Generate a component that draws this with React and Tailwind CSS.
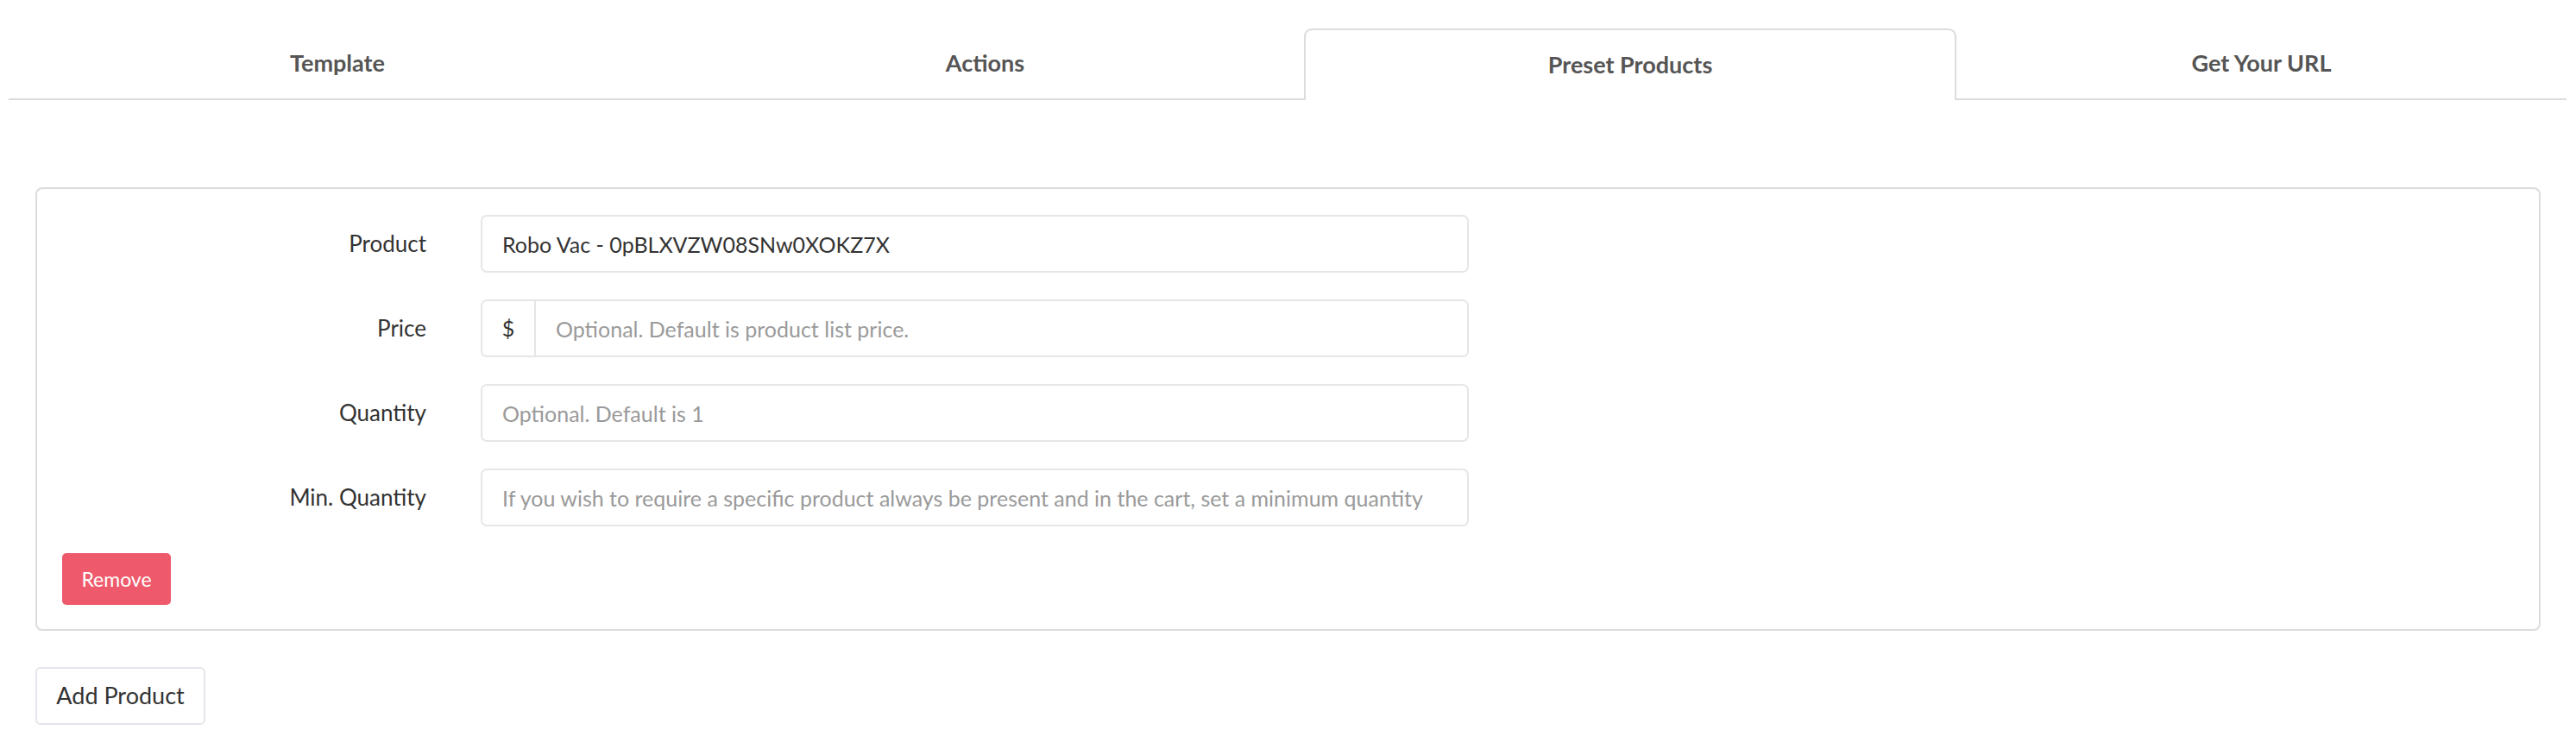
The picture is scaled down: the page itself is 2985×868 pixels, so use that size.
import { useState } from 'react'

const tabs = [
  { label: 'Template', w: 'w-[762px]' },
  { label: 'Actions', w: 'w-[739px]' },
  { label: 'Preset Products', w: 'w-[756px]', active: true },
  { label: 'Get Your URL', w: 'w-[707px]' },
]

function Field({ label, children }) {
  return (
    <div className="flex h-[67px] items-center">
      <div className="w-[422px] text-right text-[26px] text-[#333]">{label}</div>
      <div className="ml-[63px] h-full w-[1145px]">{children}</div>
    </div>
  )
}

const inputCls =
  'h-full w-full rounded-[7px] border-2 border-[#e6e6e6] bg-white px-[23px] text-[25px] text-[#333] placeholder:text-[#9a9a9a] outline-none'

export default function App() {
  const [product, setProduct] = useState('Robo Vac - 0pBLXVZW08SNw0XOKZ7X')

  return (
    <div className="min-h-screen bg-white pt-[33px] font-['Lato',sans-serif]">
      {/* tab strip */}
      <div className="flex h-[83px] pl-[10px]">
        {tabs.map((t) =>
          t.active ? (
            <div
              key={t.label}
              className={`${t.w} flex items-center justify-center rounded-t-[9px] border-2 border-b-0 border-[#dcdcdc] text-[27px] font-bold text-[#555]`}
            >
              {t.label}
            </div>
          ) : (
            <div
              key={t.label}
              className={`${t.w} flex items-center justify-center border-b-2 border-[#dcdcdc] text-[27px] font-bold text-[#555]`}
            >
              {t.label}
            </div>
          )
        )}
      </div>

      <div className="mx-[41px] mt-[101px]">
        <div className="rounded-[8px] border-2 border-[#dcdcdc] px-[29px] pb-[28px] pt-[30px]">
          <div className="flex flex-col gap-[31px]">
            <Field label="Product">
              <input className={inputCls} value={product} onChange={(e) => setProduct(e.target.value)} />
            </Field>
            <Field label="Price">
              <div className="flex h-full w-full overflow-hidden rounded-[7px] border-2 border-[#e6e6e6]">
                <div className="flex w-[62px] shrink-0 items-center justify-center border-r-2 border-[#e6e6e6] text-[25px] text-[#333]">
                  $
                </div>
                <input
                  className="h-full flex-1 bg-white px-[23px] text-[25px] text-[#333] outline-none placeholder:text-[#9a9a9a]"
                  placeholder="Optional. Default is product list price."
                />
              </div>
            </Field>
            <Field label="Quantity">
              <input className={inputCls} placeholder="Optional. Default is 1" />
            </Field>
            <Field label="Min. Quantity">
              <input
                className={inputCls}
                placeholder="If you wish to require a specific product always be present and in the cart, set a minimum quantity"
              />
            </Field>
          </div>
          <button className="mt-[31px] h-[60px] w-[126px] rounded-[5px] bg-[#ee5a6b] text-[23px] text-white">
            Remove
          </button>
        </div>

        <button className="mt-[42px] h-[67px] w-[197px] rounded-[6px] border-2 border-[#e3e6ea] bg-white text-[27px] text-[#333]">
          Add Product
        </button>
      </div>
    </div>
  )
}
